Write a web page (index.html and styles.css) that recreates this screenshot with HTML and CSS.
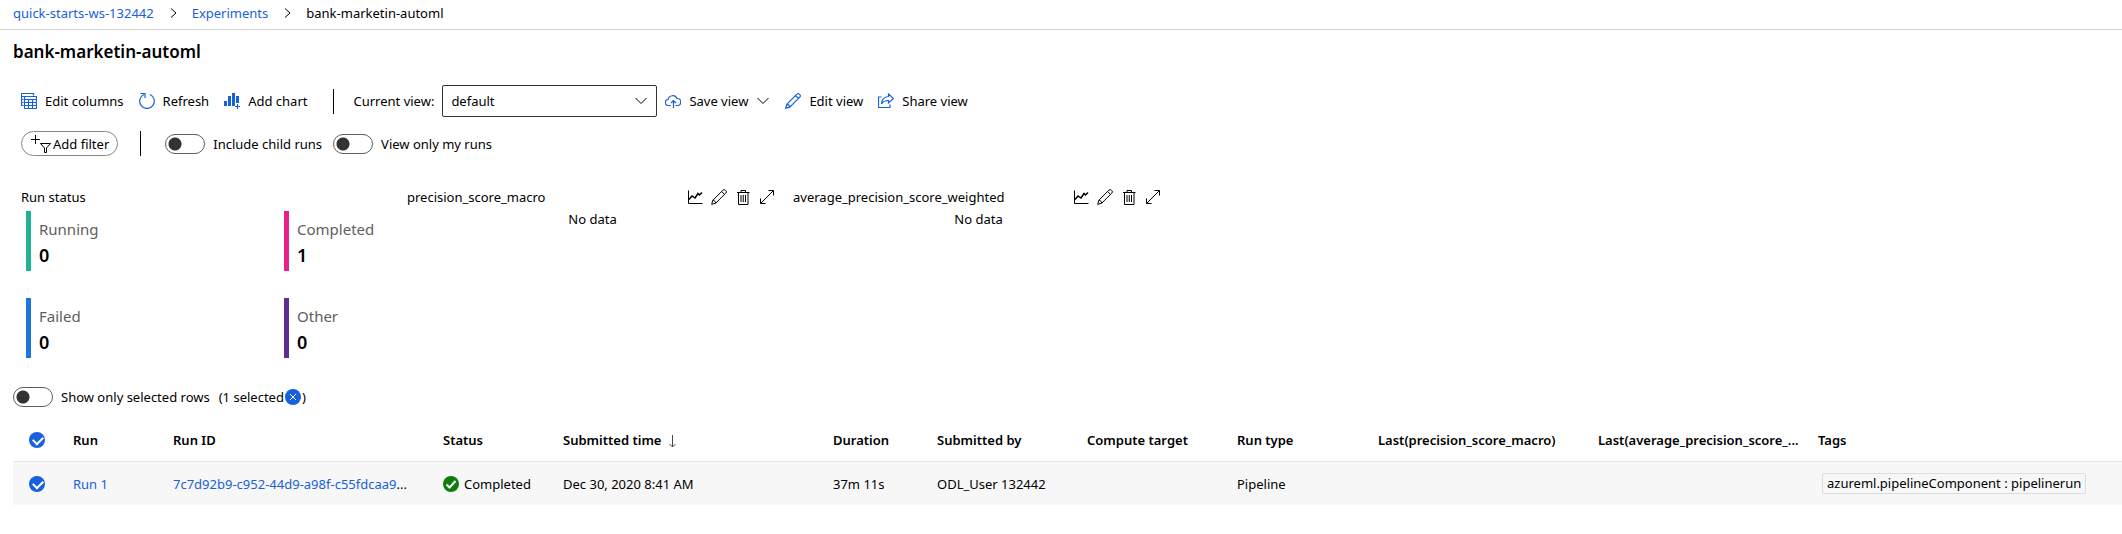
FILE: index.html
```html
<!DOCTYPE html>
<html lang="en">
<head>
<meta charset="utf-8">
<title>bank-marketin-automl</title>
<link rel="stylesheet" href="styles.css">
</head>
<body>
<svg class="sprite" aria-hidden="true">
  <symbol id="i-pencil" viewBox="0 0 16 16"><path d="M.7 15.3l1.100-4L11.900 1.200a1.700 1.700 0 0 1 2.500 0l.4.4a1.700 1.700 0 0 1 0 2.500L4.700 14.200zM10.600 2.500l2.900 2.900M1.800 11.300c1.500.1 2.800 1.200 2.900 2.900"/></symbol>
  <symbol id="i-chart" viewBox="0 0 16 16"><path d="M1.500 1.500v13H15.500"/><path class="bold" d="M2 10.500l3-3.500 3 2 3-4.500 1.500 1.500 2.500-2.500"/></symbol>
  <symbol id="i-trash" viewBox="0 0 16 16"><path d="M2 3.500h12.500M6 3.500v-2h4.500v2M3.500 3.500v12h9.500v-12M6 6v7M8.250 6v7M10.500 6v7"/></symbol>
  <symbol id="i-expand" viewBox="0 0 16 16"><path d="M1.500 14.500l13-13M9.500 1.500h5v5M1.500 9.500v5h5"/></symbol>
  <symbol id="i-down" viewBox="0 0 14 14"><path d="M1.500 4l5.500 5.500L12.500 4"/></symbol>
  <symbol id="i-right" viewBox="0 0 14 14"><path d="M5 2.500l5 4.500-5 4.500"/></symbol>
</svg>

<nav class="breadcrumb" aria-label="Breadcrumb">
  <a href="#">quick-starts-ws-132442</a>
  <svg class="icon small"><use href="#i-right"/></svg>
  <a href="#">Experiments</a>
  <svg class="icon small"><use href="#i-right"/></svg>
  <span>bank-marketin-automl</span>
</nav>

<main>
  <h1>bank-marketin-automl</h1>

  <div class="toolbar">
    <button class="command" type="button"><svg class="icon blue" viewBox="0 0 16 16"><path d="M2.500 12.500h-2V.5h12v2M.5 3.500h3M.5 6.500h2M.5 9.500h2M3.500 3.500h12v12h-12zM3.500 6.500h12M3.500 9.500h12M3.500 12.500h12M7.500 6.500v9M11.500 6.500v9"/></svg>Edit columns</button>
    <button class="command" type="button"><svg class="icon blue" viewBox="0 0 16 16"><path d="M5 1.500A7.300 7.300 0 1 0 11 1.500M1.500.5h4.500v4.500"/></svg>Refresh</button>
    <button class="command" type="button"><svg class="icon blue" viewBox="0 0 16 16"><path class="solid" d="M0 8h3v5H0zM4 3h3v10H4zM8 0h3v13H8zM12 3h3v7h-3z"/><path d="M13.500 11v5M11 13.500h5"/></svg>Add chart</button>
    <span class="divider"></span>
    <label class="view-label" for="view">Current view:</label>
    <span class="select-box">
      <select id="view"><option>default</option></select>
      <svg class="icon small"><use href="#i-down"/></svg>
    </span>
    <button class="command" type="button"><svg class="icon blue" viewBox="0 0 16 16"><path d="M6 12.500H3.500a3 3 0 0 1-.4-6A4.700 4.700 0 0 1 12 5.500a3.500 3.500 0 0 1 .5 7H10.500M8.500 15V7.500M6 10l2.500-2.500L11 10"/></svg>Save view<svg class="icon small dark"><use href="#i-down"/></svg></button>
    <button class="command" type="button"><svg class="icon blue"><use href="#i-pencil"/></svg>Edit view</button>
    <button class="command" type="button"><svg class="icon blue" viewBox="0 0 16 16"><path d="M3.500 4H.5v10.500h11.500V11.500M10.500 1l5 4.500-5 4.500V7.500C7.500 7.500 5 8.500 3.500 11 3.800 6.500 6.500 3.800 10.500 3.500z"/></svg>Share view</button>
  </div>

  <div class="filters">
    <button class="pill" type="button"><svg class="filter-icon" viewBox="0 0 22 18"><path d="M5.500 0v9M1 4.500h9M10.500 8.500h10l-4 4.500v4.500h-2V13z"/></svg>Add filter</button>
    <span class="divider"></span>
    <label class="switch"><input type="checkbox">Include child runs</label>
    <label class="switch"><input type="checkbox">View only my runs</label>
  </div>

  <div class="cards">
    <section class="card">
      <h2>Run status</h2>
      <div class="stats">
        <div class="stat green"><span>Running</span><strong>0</strong></div>
        <div class="stat pink"><span>Completed</span><strong>1</strong></div>
        <div class="stat azure"><span>Failed</span><strong>0</strong></div>
        <div class="stat purple"><span>Other</span><strong>0</strong></div>
      </div>
    </section>
    <section class="card">
      <header><h2>precision_score_macro</h2>
        <button type="button" aria-label="Chart type"><svg class="icon"><use href="#i-chart"/></svg></button>
        <button type="button" aria-label="Edit"><svg class="icon"><use href="#i-pencil"/></svg></button>
        <button type="button" aria-label="Delete"><svg class="icon"><use href="#i-trash"/></svg></button>
        <button type="button" aria-label="Expand"><svg class="icon"><use href="#i-expand"/></svg></button>
      </header>
      <p>No data</p>
    </section>
    <section class="card">
      <header><h2>average_precision_score_weighted</h2>
        <button type="button" aria-label="Chart type"><svg class="icon"><use href="#i-chart"/></svg></button>
        <button type="button" aria-label="Edit"><svg class="icon"><use href="#i-pencil"/></svg></button>
        <button type="button" aria-label="Delete"><svg class="icon"><use href="#i-trash"/></svg></button>
        <button type="button" aria-label="Expand"><svg class="icon"><use href="#i-expand"/></svg></button>
      </header>
      <p>No data</p>
    </section>
  </div>

  <div class="selection">
    <label class="switch"><input type="checkbox">Show only selected rows</label>
    <span class="count">(1 selected<button type="button" aria-label="Clear selection"><svg viewBox="0 0 16 16"><circle cx="8" cy="8" r="8"/><path d="M5 5l6 6M11 5l-6 6"/></svg></button>)</span>
  </div>

  <table>
    <colgroup>
      <col class="w-check"><col class="w-run"><col class="w-wide"><col class="w-status"><col class="w-wide"><col class="w-duration"><col class="w-mid"><col class="w-mid"><col class="w-type"><col class="w-metric"><col class="w-metric"><col>
    </colgroup>
    <thead>
      <tr>
        <th><input class="tick" type="checkbox" aria-label="Select all" checked></th>
        <th>Run</th><th>Run ID</th><th>Status</th>
        <th>Submitted time<svg class="sort" viewBox="0 0 8 14"><path d="M4.500 1v12M1.500 10l3 3 3-3"/></svg></th>
        <th>Duration</th><th>Submitted by</th><th>Compute target</th><th>Run type</th>
        <th>Last(precision_score_macro)</th><th>Last(average_precision_score_...</th><th>Tags</th>
      </tr>
    </thead>
    <tbody>
      <tr>
        <td><input class="tick" type="checkbox" aria-label="Select Run 1" checked></td>
        <td><a href="#">Run 1</a></td>
        <td><a href="#">7c7d92b9-c952-44d9-a98f-c55fdcaa9</a>...</td>
        <td><span class="status"><svg viewBox="0 0 16 16"><circle cx="8" cy="8" r="8"/><path d="M3.500 8.500l3 3 6-6.500"/></svg>Completed</span></td>
        <td>Dec 30, 2020 8:41 AM</td>
        <td>37m 11s</td>
        <td>ODL_User 132442</td>
        <td></td>
        <td>Pipeline</td>
        <td></td>
        <td></td>
        <td><span class="tag">azureml.pipelineComponent : pipelinerun</span></td>
      </tr>
    </tbody>
  </table>
</main>
</body>
</html>
```
FILE: styles.css
```css
* { box-sizing: border-box; }
body {
  margin: 0;
  background: #fff;
  color: #000;
  font: 13px/20px "Noto Sans", "Open Sans", sans-serif;
}
a { color: #1860dc; text-decoration: none; }
button {
  padding: 0;
  border: 0;
  background: none;
  color: inherit;
  font: inherit;
}
svg { flex: none; fill: none; stroke: currentColor; }
.sprite { display: none; }
.icon { width: 16px; height: 16px; display: block; }
.small { width: 14px; height: 14px; }
.blue { color: #1860dc; stroke-width: 1.2; }
.bold { stroke-width: 1.5; }
.solid { fill: currentColor; stroke: none; }

.breadcrumb {
  display: flex;
  align-items: center;
  gap: 12px;
  height: 30px;
  padding: 0 13px 4px;
  border-bottom: 1px solid #d6d6d6;
}
h1 { margin: 10px 13px 0; font-size: 17px; line-height: 24px; font-weight: 600; }

.toolbar, .filters, .selection { display: flex; align-items: center; }
.toolbar { margin: 21px 21px 0; }
.command { display: flex; align-items: center; gap: 8px; margin-right: 15px; }
.divider { width: 1px; height: 25px; background: #000; }
.toolbar .divider { margin: 0 19px 0 11px; }
.view-label { margin-right: 8px; }
.select-box { display: grid; align-items: center; width: 215px; margin-right: 8px; }
.select-box > * { grid-area: 1 / 1; }
.select-box svg { justify-self: end; margin-right: 9px; pointer-events: none; }
select {
  appearance: none;
  height: 32px;
  padding: 0 8px;
  border: 1px solid #323130;
  border-radius: 2px;
  background: #fff;
  color: inherit;
  font: inherit;
}

.filters { margin: 14px 21px 0; }
.pill {
  display: flex;
  align-items: center;
  height: 25px;
  gap: 1px;
  padding: 0 8px;
  border: 1px solid #8a8886;
  border-radius: 13px;
}
.filter-icon { width: 22px; height: 18px; }
.filters .divider { margin: 0 24px 0 22px; }
.switch { display: flex; align-items: center; gap: 8px; margin-right: 11px; }
.switch input {
  appearance: none;
  width: 40px;
  height: 20px;
  margin: 0;
  border: 1px solid #605e5c;
  border-radius: 10px;
  background: radial-gradient(circle at 9px 9px, #333 6px, transparent 7px);
}

.cards { display: flex; gap: 15px; margin: 31px 21px 0; }
.card { flex: 0 0 371px; }
.card header { display: flex; align-items: center; gap: 8px; padding-right: 3px; }
.card h2 { flex: 1; margin: 0; font-size: 13px; line-height: 20px; font-weight: 400; }
.card p { margin: 2px 0 0; text-align: center; }
.stats {
  display: grid;
  grid-template-columns: 258px 1fr;
  row-gap: 27px;
  margin: 4px 0 0 5px;
}
.stat {
  display: flex;
  flex-direction: column;
  height: 60px;
  padding: 6px 0 0 8px;
  border-left: 5px solid;
}
.stat span { color: #605e5c; font-size: 15px; line-height: 24px; }
.stat strong { color: #000; font-size: 18px; line-height: 28px; font-weight: 600; }
.green { border-color: #20b094; }
.pink { border-color: #e8208c; }
.azure { border-color: #1c78d8; }
.purple { border-color: #5c2e91; }

.selection { margin: 29px 13px 0; }
.selection .switch { margin-right: 9px; }
.count { display: flex; align-items: center; }
.count button { margin: 0 1px; }
.count svg, .status svg { display: block; width: 16px; height: 16px; }
.count circle { fill: #1860dc; stroke: none; }
.count path { stroke: #fff; }

table {
  width: calc(100% - 13px);
  margin: 11px 0 0 13px;
  border-collapse: separate;
  border-spacing: 0;
  table-layout: fixed;
}
.w-check { width: 60px; }
.w-run { width: 100px; }
.w-wide { width: 270px; }
.w-status { width: 120px; }
.w-duration { width: 104px; }
.w-mid { width: 150px; }
.w-type { width: 141px; }
.w-metric { width: 220px; }
th, td {
  height: 44px;
  padding: 0 8px 0 0;
  text-align: left;
  white-space: nowrap;
  vertical-align: middle;
}
th { height: 43px; font-weight: 600; }
td { border-top: 1px solid #e8e6e6; background: #f7f7f7; }
th:first-child, td:first-child { padding: 0 0 0 16px; }
.tick {
  appearance: none;
  display: block;
  width: 16px;
  height: 16px;
  margin: 0;
  padding: 4px;
  border-radius: 50%;
  background: #1860dc;
}
.tick::before {
  content: "";
  display: block;
  width: 8px;
  height: 5px;
  border: solid #fff;
  border-width: 0 0 2px 2px;
  transform: rotate(-45deg);
}
.sort { width: 8px; height: 14px; margin-left: 7px; vertical-align: middle; color: #444; }
.status { display: flex; align-items: center; gap: 5px; }
.status circle { fill: #107c10; stroke: none; }
.status path { stroke: #fff; stroke-width: 2; }
.tag {
  display: inline-block;
  margin-left: 4px;
  padding: 0 4px;
  border: 1px solid #dcdcdc;
  border-radius: 2px;
  line-height: 19px;
}
```
